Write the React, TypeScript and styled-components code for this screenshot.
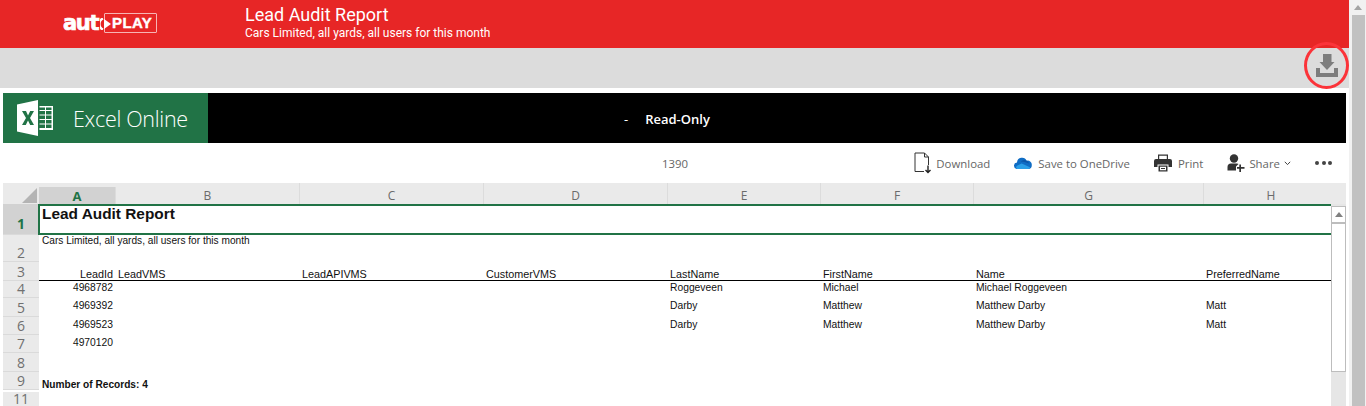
import React from 'react';
import styled, { createGlobalStyle } from 'styled-components';

const columns = [
    { label: 'A', width: 77 },
    { label: 'B', width: 184 },
    { label: 'C', width: 184 },
    { label: 'D', width: 184 },
    { label: 'E', width: 153 },
    { label: 'F', width: 153 },
    { label: 'G', width: 230 },
    { label: 'H', width: 134 },
];

const dataRows = [
    { num: '4', height: 17, top: 1, cells: ['4968782', '', '', '', 'Roggeveen', 'Michael', 'Michael Roggeveen', ''] },
    { num: '5', height: 19, top: 2, cells: ['4969392', '', '', '', 'Darby', 'Matthew', 'Matthew Darby', 'Matt'] },
    { num: '6', height: 18, top: 2, cells: ['4969523', '', '', '', 'Darby', 'Matthew', 'Matthew Darby', 'Matt'] },
    { num: '7', height: 18, top: 2, cells: ['4970120', '', '', '', '', '', '', ''] },
];

const headings = ['LeadId', 'LeadVMS', 'LeadAPIVMS', 'CustomerVMS', 'LastName', 'FirstName', 'Name', 'PreferredName'];

const App = () => {
    return (
        <Page>
            <GlobalStyle />
            <Main>
                <Header>
                    <Logo>
                        <LogoWord>aut</LogoWord>
                        <LogoPlayMark viewBox='0 0 11 12'>
                            <path d='M4 1 L11 6 L4 11 Z' fill='#fff' />
                            <path d='M3 0.5 A6 6 0 0 0 3 11.5' fill='none' stroke='#fff' strokeWidth='2.4' />
                        </LogoPlayMark>
                        <LogoBox>PLAY</LogoBox>
                    </Logo>
                    <HeaderText>
                        <Title>Lead Audit Report</Title>
                        <Subtitle>Cars Limited, all yards, all users for this month</Subtitle>
                    </HeaderText>
                </Header>
                <ActionBar>
                    <DownloadRing>
                        <svg width='22' height='23' viewBox='0 0 22 23'>
                            <path d='M7 0 H15.5 V8 H18.5 L11 16 L3.5 8 H7 Z' fill='#7d7d7d' />
                            <path d='M0 14 H4 V19 H18 V14 H22 V23 H0 Z' fill='#7d7d7d' />
                        </svg>
                    </DownloadRing>
                </ActionBar>
                <Frame>
                    <BlackBar>
                        <Brand>
                            <svg width='36' height='36' viewBox='0 0 36 36'>
                                <path d='M0 4.5 L21 0 V36 L0 31.5 Z' fill='#fff' />
                                <path d='M5 11 H9 L11 15.5 L13.2 11 H17 L13 18 L17 25 H13.2 L11 20.5 L8.8 25 H5 L9 18 Z' fill='#217346' />
                                <path
                                    d='M22.5 6 H36 V30 H22.5 V28 H28 V24.5 H22.5 V23.5 H28 V20 H22.5 V19 H28 V15.5 H22.5 V14.5 H28 V11 H22.5 V10 H28 V7.5 H22.5 Z M29 7.5 V10 H34.5 V7.5 Z M29 11 V14.5 H34.5 V11 Z M29 15.5 V19 H34.5 V15.5 Z M29 20 V23.5 H34.5 V20 Z M29 24.5 V28 H34.5 V24.5 Z'
                                    fill='#fff'
                                    fillRule='evenodd'
                                />
                            </svg>
                            <BrandName>Excel Online</BrandName>
                        </Brand>
                        <ReadOnly>
                            <span>-</span>
                            <strong>Read-Only</strong>
                        </ReadOnly>
                    </BlackBar>
                    <Toolbar>
                        <Count>1390</Count>
                        <Actions>
                            <Action>
                                <svg width='19' height='22' viewBox='0 0 19 22' fill='none' stroke='#333' strokeWidth='1'>
                                    <path d='M10 19.5 H1 V1 H10.5 L14.5 5 V13' />
                                    <path d='M10.5 1 V5 H14.5' />
                                    <path d='M14 13.5 V20.5 M11.5 18 L14 20.5 L16.5 18' strokeWidth='1.4' stroke='#222' />
                                </svg>
                                Download
                            </Action>
                            <Action $gap={6}>
                                <svg width='18' height='12' viewBox='0 0 19 13'>
                                    <path d='M3.5 13 A3.5 3.5 0 0 1 3 6 A5.5 5.5 0 0 1 13.5 4 A4.5 4.5 0 0 1 19 9 A4 4 0 0 1 16 13 Z' fill='#0f6cc4' />
                                    <path d='M7 5 A5.5 5.5 0 0 1 13.5 4 A4.5 4.5 0 0 1 16 7 Q11 5 7 5 Z' fill='#0b56a8' />
                                    <path d='M3 13 Q1 11 3 9.5 L8 7 L17 11 Q17 13 15 13 Z' fill='#2a9fe8' />
                                </svg>
                                Save to OneDrive
                            </Action>
                            <Action $gap={6}>
                                <svg width='18' height='18' viewBox='0 0 18 18'>
                                    <path d='M4 0.5 H14 V5 H12.8 V1.7 H5.2 V5 H4 Z' fill='#333' />
                                    <path d='M2 5 H16 Q18 5 18 7 V13 H14.5 V10.5 H3.5 V13 H0 V7 Q0 5 2 5 Z' fill='#333' />
                                    <path d='M4.5 11.5 H13.5 V17.5 H4.5 Z M6 12.8 V16.2 H12 V12.8 Z' fill='#333' fillRule='evenodd' />
                                    <path d='M7 14 H11 V15 H7 Z' fill='#333' />
                                </svg>
                                Print
                            </Action>
                            <Action $gap={4}>
                                <svg width='18' height='18' viewBox='0 0 18 18'>
                                    <circle cx='7' cy='4.5' r='4.2' fill='#333' />
                                    <path d='M0.5 16.5 V13 Q0.5 9.5 4 9.5 H10 Q11 9.5 11.5 10 L9 12.5 V16.5 Z' fill='#333' />
                                    <path d='M12.3 10.5 H14 V13 H17.5 V14.7 H14 V18 H12.3 V14.7 H10 V13 H12.3 Z' fill='#333' />
                                </svg>
                                Share
                                <svg width='7' height='5' viewBox='0 0 7 5' fill='none' stroke='#444' strokeWidth='1'>
                                    <path d='M0.8 0.8 L3.5 3.6 L6.2 0.8' />
                                </svg>
                            </Action>
                            <Dots>
                                <Dot />
                                <Dot />
                                <Dot />
                            </Dots>
                        </Actions>
                    </Toolbar>
                    <SheetArea>
                        <Sheet>
                            <HeadRow>
                                <Corner>
                                    <svg width='15' height='15' viewBox='0 0 15 15'>
                                        <path d='M15 0 V15 H0 Z' fill='#b4b4b4' />
                                    </svg>
                                </Corner>
                                {columns.map((col, i) => (
                                    <ColHead key={col.label} $width={col.width} $active={i === 0} $last={i === columns.length - 1}>
                                        {col.label}
                                    </ColHead>
                                ))}
                            </HeadRow>
                            <SheetRow $height={31}>
                                <RowHead $active>1</RowHead>
                                <SelectedCell>Lead Audit Report</SelectedCell>
                            </SheetRow>
                            <SheetRow $height={27}>
                                <RowHead>2</RowHead>
                                <PlainCell $top={0}>Cars Limited, all yards, all users for this month</PlainCell>
                            </SheetRow>
                            <SheetRow $height={19}>
                                <RowHead>3</RowHead>
                                <HeadingCells>
                                    {headings.map((text, i) => (
                                        <Cell key={text} $width={columns[i].width} $right={i === 0} $heading>
                                            {text}
                                        </Cell>
                                    ))}
                                </HeadingCells>
                            </SheetRow>
                            {dataRows.map(row => (
                                <SheetRow key={row.num} $height={row.height}>
                                    <RowHead>{row.num}</RowHead>
                                    <DataCells $top={row.top}>
                                        {row.cells.map((text, i) => (
                                            <Cell key={i} $width={columns[i].width} $right={i === 0}>
                                                {text}
                                            </Cell>
                                        ))}
                                    </DataCells>
                                </SheetRow>
                            ))}
                            <SheetRow $height={19}>
                                <RowHead>8</RowHead>
                            </SheetRow>
                            <SheetRow $height={18}>
                                <RowHead>9</RowHead>
                                <PlainCell $top={7} $bold>
                                    Number of Records: 4
                                </PlainCell>
                            </SheetRow>
                            <SheetRow $height={16} $double>
                                <RowHead $tight>11</RowHead>
                            </SheetRow>
                        </Sheet>
                        <SheetScroll>
                            <ScrollButton>
                                <svg width='8' height='5' viewBox='0 0 8 5'>
                                    <path d='M4 0 L8 5 H0 Z' fill='#808080' />
                                </svg>
                            </ScrollButton>
                            <ScrollThumb />
                        </SheetScroll>
                    </SheetArea>
                </Frame>
            </Main>
            <PageScroll>
                <svg width='8' height='5' viewBox='0 0 8 5'>
                    <path d='M4 0 L8 5 H0 Z' fill='#a3a3a3' />
                </svg>
                <PageThumb />
            </PageScroll>
        </Page>
    );
};

export default App;

const GlobalStyle = createGlobalStyle`
    html,
    body {
        margin: 0;
        height: 406px;
        overflow: hidden;
        background: #fff;
    }
`;

const Page = styled.div`
    display: flex;
    width: 1366px;
    height: 406px;
    overflow: hidden;
`;

const Main = styled.div`
    width: 1349px;
    flex: none;
`;

const Header = styled.header`
    display: flex;
    align-items: center;
    height: 48px;
    background: #e72626;
    color: #fff;
    font-family: Roboto, sans-serif;
`;

const Logo = styled.div`
    display: flex;
    align-items: center;
    width: 182px;
    height: 21px;
    margin-left: 63px;
    margin-top: -2px;
`;

const LogoWord = styled.span`
    width: 37px;
    flex: none;
    font: 700 21px/20px 'DejaVu Sans', sans-serif;
    letter-spacing: -1.3px;
    -webkit-text-stroke: 0.7px #fff;
`;

const LogoPlayMark = styled.svg`
    position: relative;
    z-index: 1;
    width: 11px;
    height: 12px;
    flex: none;
    margin-top: 2px;
`;

const LogoBox = styled.span`
    width: 53px;
    height: 20px;
    flex: none;
    box-sizing: border-box;
    margin-left: -7px;
    padding-left: 7px;
    border: 1px solid #f7b4b4;
    border-radius: 1px;
    font: 700 15px/18px 'Liberation Sans', sans-serif;
    letter-spacing: 0.4px;
    -webkit-text-stroke: 0.4px #fff;
`;

const HeaderText = styled.div`
    display: flex;
    flex-direction: column;
    margin-top: -3px;
`;

const Title = styled.div`
    font-size: 18px;
    line-height: 22px;
`;

const Subtitle = styled.div`
    font-size: 12px;
    line-height: 15px;
`;

const ActionBar = styled.div`
    height: 40px;
    background: #dcdcdc;
    position: relative;
`;

const DownloadRing = styled.div`
    position: absolute;
    top: -6px;
    right: 0;
    display: flex;
    align-items: center;
    justify-content: center;
    box-sizing: border-box;
    width: 45px;
    height: 47px;
    border: 3.5px solid #fb3339;
    border-radius: 50%;
`;

const Frame = styled.div`
    margin: 5px 3px 0;
`;

const BlackBar = styled.div`
    display: flex;
    height: 50px;
    background: #000;
    color: #fff;
`;

const Brand = styled.div`
    display: flex;
    align-items: center;
    gap: 20px;
    width: 205px;
    padding-left: 14px;
    box-sizing: border-box;
    background: #217346;
`;

const BrandName = styled.span`
    font: 300 21.5px 'Open Sans', sans-serif;
    color: #fff;
    letter-spacing: -0.3px;
`;

const ReadOnly = styled.div`
    display: flex;
    align-items: center;
    gap: 17px;
    margin-left: 416px;
    padding-top: 1px;
    font: 13px 'Open Sans', sans-serif;

    strong {
        font-weight: 600;
    }
`;

const Toolbar = styled.div`
    display: flex;
    align-items: center;
    height: 40px;
    background: #fff;
    font: 11.4px 'Open Sans', sans-serif;
    color: #666;
`;

const Count = styled.span`
    margin-left: 659px;
`;

const Actions = styled.div`
    display: flex;
    align-items: center;
    gap: 24px;
    margin-left: auto;
    padding-right: 14px;
`;

const Action = styled.div<{ $gap?: number }>`
    display: flex;
    align-items: center;
    gap: ${p => p.$gap ?? 3}px;
`;

const Dots = styled.div`
    display: flex;
    gap: 2.5px;
`;

const Dot = styled.span`
    width: 4px;
    height: 4px;
    border-radius: 50%;
    background: #444;
`;

const SheetArea = styled.div`
    display: flex;
    height: 223px;
    overflow: hidden;
    background: #e6e6e6;
`;

const Sheet = styled.div`
    width: 1328px;
    flex: none;
    background: #fff;
`;

const HeadRow = styled.div`
    display: flex;
    height: 21px;
    font: 12px/26px 'Open Sans', sans-serif;
    color: #6b6b6b;
    background: #eaeaea;
    margin-right: -15px;
`;

const Corner = styled.div`
    display: flex;
    align-items: flex-end;
    justify-content: flex-end;
    width: 36px;
    padding: 0 2px 1px 0;
    box-sizing: border-box;
`;

const ColHead = styled.div<{ $width: number; $active?: boolean; $last?: boolean }>`
    width: ${p => p.$width}px;
    flex: none;
    box-sizing: border-box;
    text-align: center;
    border-right: ${p => (p.$last ? '0' : '1px solid #dcdcdc')};
    margin-top: ${p => (p.$active ? 4 : 0)}px;
    line-height: ${p => (p.$active ? 18 : 26)}px;
    background: ${p => (p.$active ? '#d2d2d2' : 'transparent')};
    color: ${p => (p.$active ? '#217346' : 'inherit')};
    font-weight: ${p => (p.$active ? 700 : 400)};
    font-size: ${p => (p.$active ? 13 : 12)}px;
`;

const SheetRow = styled.div<{ $height: number; $double?: boolean }>`
    display: flex;
    height: ${p => p.$height}px;
    box-sizing: border-box;
    border-top: ${p => (p.$double ? '2px solid #fff' : '0')};
`;

const RowHead = styled.div<{ $active?: boolean; $tight?: boolean }>`
    display: flex;
    align-items: flex-end;
    justify-content: center;
    width: 36px;
    flex: none;
    box-sizing: border-box;
    padding-bottom: ${p => (p.$active ? 2 : 0)}px;
    background: ${p => (p.$active ? '#d2d2d2' : '#eaeaea')};
    border-bottom: ${p => (p.$tight ? '0' : '1px solid #dadada')};
    font: ${p => (p.$active ? 700 : 400)} 14px/${p => (p.$tight ? 14 : 16)}px 'Open Sans', sans-serif;
    color: ${p => (p.$active ? '#217346' : '#707070')};
`;

const SelectedCell = styled.div`
    flex: 1;
    box-sizing: border-box;
    padding: 0 0 0 2px;
    border: 2px solid #217346;
    border-right: 0;
    margin-left: -1px;
    font: 700 15.4px/16px 'Liberation Sans', sans-serif;
    color: #111;
`;

const PlainCell = styled.div<{ $top: number; $bold?: boolean }>`
    padding: ${p => p.$top}px 0 0 3px;
    font: ${p => (p.$bold ? 700 : 400)} 10.15px/12px 'Liberation Sans', sans-serif;
    color: #111;
`;

const HeadingCells = styled.div`
    display: flex;
    flex: 1;
    align-items: flex-end;
    border-bottom: 1px solid #000;
    box-sizing: border-box;
    height: 19px;
    min-width: 0;
`;

const DataCells = styled.div<{ $top: number }>`
    display: flex;
    flex: 1;
    min-width: 0;
    padding-top: ${p => p.$top}px;
`;

const Cell = styled.div<{ $width: number; $right?: boolean; $heading?: boolean }>`
    width: ${p => p.$width}px;
    flex: none;
    box-sizing: border-box;
    padding: ${p => (p.$right ? '0 3px 0 0' : '0 0 0 2px')};
    text-align: ${p => (p.$right ? 'right' : 'left')};
    font: ${p => (p.$heading ? '10.8px/11px' : '10.3px/12px')} 'Liberation Sans', sans-serif;
    color: #111;
    white-space: nowrap;
`;

const SheetScroll = styled.div`
    display: flex;
    flex-direction: column;
    width: 15px;
    flex: none;
    padding-top: 23px;
`;

const ScrollButton = styled.div`
    display: flex;
    align-items: center;
    justify-content: center;
    height: 17px;
    box-sizing: border-box;
    background: #fff;
    border: 1px solid #bdbdbd;
`;

const ScrollThumb = styled.div`
    height: 149px;
    box-sizing: border-box;
    background: #fff;
    border: 1px solid #bdbdbd;
`;

const PageScroll = styled.div`
    display: flex;
    flex-direction: column;
    align-items: center;
    flex: 1;
    padding: 5px 0 0 1px;
    box-sizing: border-box;
    background: #f1f1f1;
`;

const PageThumb = styled.div`
    width: 13px;
    flex: 1;
    margin-top: 5px;
    background: #c1c1c1;
`;
